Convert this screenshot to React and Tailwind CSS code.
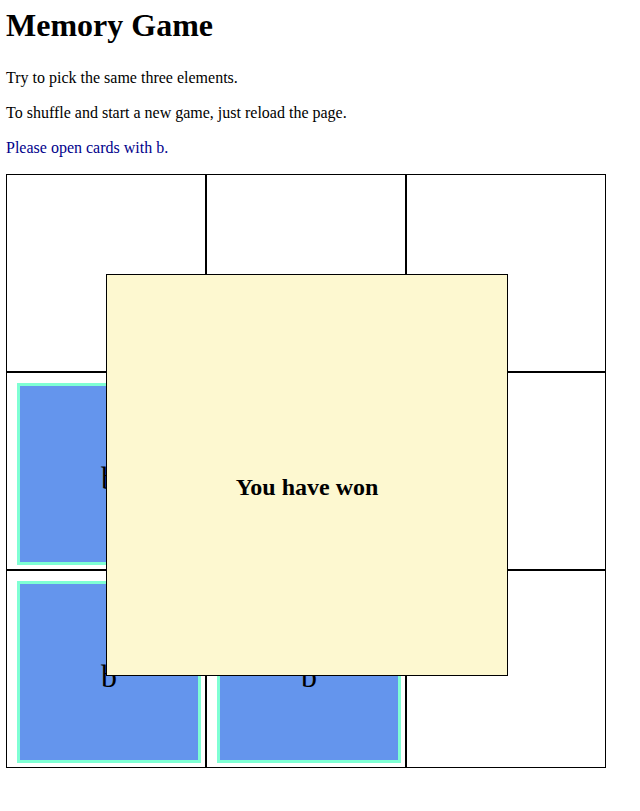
import React from 'react';

const cells = [
  null, null, null,
  'b', null, null,
  'b', 'b', null,
];

const Card = ({ value }) => (
  <div className="mt-[10px] ml-[10px] w-[184px] h-[182px] border-[3px] border-[#7fffd4] bg-[#6495ed]">
    <div className="pt-[74px] text-center text-[32px] leading-[37px]">{value}</div>
  </div>
);

const App = () => {
  return (
    <div className="px-[6px] pb-10 text-black bg-white" style={{ fontFamily: '"Liberation Serif", "Times New Roman", serif' }}>
      <h1 className="mt-[7px] text-[32px] leading-[37px] font-bold">Memory Game</h1>
      <p className="mt-[24px] text-[16px] leading-[19px]">Try to pick the same three elements.</p>
      <p className="mt-[16px] text-[16px] leading-[19px]">To shuffle and start a new game, just reload the page.</p>
      <p className="mt-[16px] text-[16px] leading-[19px] text-[#00008b]">Please open cards with b.</p>

      {/* Board */}
      <div className="relative mt-[17px] grid grid-cols-[repeat(3,200px)] w-[600px]">
        {cells.map((c, i) => (
          <div key={i} className="w-[200px] h-[198px] border border-black bg-white">
            {c && <Card value={c} />}
          </div>
        ))}

        {/* Win overlay */}
        <div className="absolute left-[100px] top-[100px] w-[402px] h-[402px] border border-black bg-[#fdf8d0]">
          <h2 className="pt-[198px] text-center text-[24px] leading-[28px] font-bold">You have won</h2>
        </div>
      </div>
    </div>
  );
};

export default App;
